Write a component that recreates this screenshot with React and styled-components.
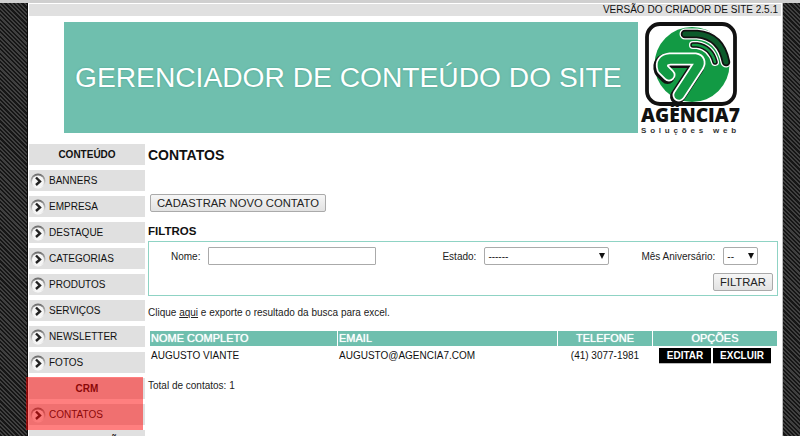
import React from "react";
import styled, { createGlobalStyle } from "styled-components";

const GlobalStyle = createGlobalStyle`
  html, body {
    margin: 0;
    padding: 0;
    height: 436px;
    overflow: hidden;
  }
  body {
    box-sizing: border-box;
    border-top: 3px solid #cfcfcf;
    font-family: "Liberation Sans", Arial, sans-serif;
    color: #111;
    background: repeating-linear-gradient(45deg, #161616 0, #161616 1.5px, #404040 1.5px, #404040 3px);
    background-clip: padding-box;
  }
`;

const Page = styled.div`
  width: 754px;
  height: 433px;
  margin-left: 28px;
  padding-top: 1px;
  box-sizing: border-box;
  background: #fff;
  box-shadow: -1px 0 0 #0c0c0c, 1px 0 0 #bdbdbd;
`;

const VersionBar = styled.div`
  height: 12px;
  margin: 0 1px;
  background: #e0e0e0;
  font-size: 10px;
  line-height: 12px;
  text-align: right;
  padding-right: 3px;
`;

const Header = styled.div`
  display: flex;
  margin: 6px 0 0 36px;
  height: 111px;
`;

const Banner = styled.div`
  width: 574px;
  background: #6fbfae;
  color: #fff;
  font-size: 28.2px;
  line-height: 111px;
  padding-left: 11px;
  box-sizing: border-box;
  white-space: nowrap;
  text-shadow: 0 0 2px #46a08c;
`;

const Logo = styled.div`
  margin-left: 3px;
  width: 104px;
`;

const LogoName = styled.div`
  font-family: "Open Sans", sans-serif;
  font-weight: 800;
  font-size: 19.2px;
  line-height: 16px;
  color: #111;
  white-space: nowrap;
`;

const LogoTag = styled.div`
  font-size: 8px;
  line-height: 8px;
  font-weight: 700;
  letter-spacing: 3.8px;
  color: #333;
  white-space: nowrap;
  margin-top: 4px;
`;

const Body = styled.div`
  display: flex;
  margin-top: 11px;
`;

const Sidebar = styled.div`
  width: 116px;
  margin-left: 1px;
  flex: none;
`;

const MenuTitle = styled.div`
  height: 21px;
  margin-bottom: 5px;
  background: #e0e0e0;
  font-size: 10px;
  font-weight: 700;
  line-height: 21px;
  text-align: center;
`;

const MenuItem = styled.div`
  height: 21px;
  margin-bottom: 5px;
  background: #e0e0e0;
  display: flex;
  align-items: center;
  gap: 3px;
  padding-left: 1px;
  font-size: 10px;
`;

const CrmGroup = styled.div`
  position: relative;
  &::after {
    content: "";
    position: absolute;
    left: -3px;
    right: 2px;
    top: -1px;
    bottom: -5px;
    background: rgba(255, 0, 0, 0.5);
  }
`;

const Main = styled.div`
  flex: 1;
  padding: 3px 4px 0 3px;
  min-width: 0;
`;

const Title = styled.h1`
  margin: 0;
  font-size: 14px;
  line-height: 16px;
  font-weight: 700;
`;

const ActionRow = styled.div`
  margin: 31px 0 0 2px;
`;

const GrayButton = styled.button`
  display: block;
  height: 18px;
  padding: 0 6px;
  border: 1px solid #aaa;
  border-radius: 2px;
  background: linear-gradient(#f6f6f6, #e2e2e2);
  font-family: inherit;
  font-size: 11.25px;
  line-height: 16px;
  color: #222;
`;

const SectionTitle = styled.h2`
  margin: 12px 0 0;
  font-size: 11.5px;
  line-height: 14px;
  font-weight: 700;
`;

const FilterBox = styled.div`
  margin-top: 3px;
  width: 630px;
  height: 55px;
  border: 1px solid #8fd3c4;
  box-sizing: border-box;
  padding: 5px 4px 0 22px;
`;

const FilterRow = styled.div`
  display: flex;
  align-items: center;
  height: 18px;
  font-size: 10px;
  color: #222;
`;

const NameInput = styled.div`
  width: 166px;
  height: 16px;
  margin-left: 8px;
  border: 1px solid #aaa;
  border-radius: 1px;
  background: #fff;
`;

const FieldLabel = styled.span`
  margin-left: ${(p) => p.$gap}px;
  white-space: nowrap;
`;

const SelectBox = styled.div`
  width: ${(p) => p.$width}px;
  height: 16px;
  margin-left: ${(p) => p.$gap}px;
  border: 1px solid #aaa;
  border-radius: 2px;
  background: #fff;
  display: flex;
  align-items: center;
  justify-content: space-between;
  padding: 0 3px;
  font-size: 10px;
`;

const Caret = styled.span`
  width: 0;
  height: 0;
  border-left: 3px solid transparent;
  border-right: 3px solid transparent;
  border-top: 6px solid #111;
`;

const FilterAction = styled.div`
  display: flex;
  justify-content: flex-end;
  margin-top: 8px;
`;

const ExportNote = styled.p`
  margin: 11px 0 0;
  font-size: 10px;
  line-height: 12px;
  color: #222;
  a {
    color: inherit;
    text-decoration: underline;
  }
`;

const Table = styled.table`
  width: 629px;
  margin: 12px 0 0 1px;
  border-collapse: separate;
  border-spacing: 1px 0;
  table-layout: fixed;
  font-size: 10px;
`;

const Th = styled.th`
  height: 15px;
  padding: 0 1px;
  background: #6fbfae;
  color: #fff;
  font-weight: 400;
  font-size: 11px;
  line-height: 15px;
  text-align: ${(p) => (p.$center ? "center" : "left")};
  text-shadow: 0 0 1px #fff;
`;

const Td = styled.td`
  height: 18px;
  padding: 0 1px 1px;
  font-size: 10px;
  color: #111;
  text-align: ${(p) => (p.$center ? "center" : "left")};
  white-space: nowrap;
`;

const Actions = styled.div`
  display: flex;
  justify-content: center;
  gap: 2px;
  padding-top: 1px;
`;

const DarkButton = styled.span`
  width: ${(p) => p.$width}px;
  height: 15px;
  background: #000;
  color: #fff;
  border-bottom: 1px solid #bbb;
  font-size: 10px;
  font-weight: 700;
  line-height: 15px;
  text-align: center;
`;

const Total = styled.p`
  margin: 15px 0 0;
  font-size: 10px;
  line-height: 12px;
  color: #222;
`;

const Arrow = () => (
  <svg width="16" height="16" viewBox="0 0 16 16">
    <defs>
      <linearGradient id="ring" x1="0" y1="0" x2="0" y2="1">
        <stop offset="0" stopColor="#666" />
        <stop offset="0.5" stopColor="#bbb" />
        <stop offset="1" stopColor="#fff" />
      </linearGradient>
    </defs>
    <circle cx="8" cy="8" r="7.5" fill="url(#ring)" />
    <circle cx="8" cy="8.5" r="6" fill="#f6f6f6" />
    <path d="M6 4.5 L10 8.5 L6 12" fill="none" stroke="#222" strokeWidth="2.4" />
  </svg>
);

const LogoMark = () => (
  <svg width="100" height="85" viewBox="0 0 100 85" style={{ display: "block" }}>
    <rect x="6" y="2" width="88" height="80" rx="13" fill="#fff" stroke="#111" strokeWidth="3.8" />
    <circle cx="51" cy="42.5" r="37.5" fill="#129a44" />
    <path d="M44 12 H56 Q80 14 85 40" fill="none" stroke="#fff" strokeWidth="11" strokeLinecap="round" />
    <path d="M44 12 H56 Q80 14 85 40" fill="none" stroke="#111" strokeWidth="8.5" strokeLinecap="round" />
    <path d="M44 12 H56 Q80 14 85 40" fill="none" stroke="#0c5a2b" strokeWidth="5" strokeLinecap="round" />
    <path d="M52 23 H56 Q70 25 74 40" fill="none" stroke="#fff" strokeWidth="8" strokeLinecap="round" />
    <path d="M52 23 H56 Q70 25 74 40" fill="none" stroke="#111" strokeWidth="5.5" strokeLinecap="round" />
    <path d="M52 23 H56 Q70 25 74 40" fill="none" stroke="#129a44" strokeWidth="2.5" strokeLinecap="round" />
    <g transform="translate(-1.5 1.5)">
      <path d="M28 53 L22 47 Q19 38 29 37 H54 Q60 38 57 44 L38 73" fill="none" stroke="#111" strokeWidth="15" strokeLinecap="round" strokeLinejoin="round" />
    </g>
    <path d="M28 53 L22 47 Q19 38 29 37 H54 Q60 38 57 44 L38 73" fill="none" stroke="#fff" strokeWidth="13" strokeLinecap="round" strokeLinejoin="round" />
    <path d="M28 53 L22 47 Q19 38 29 37 H54 Q60 38 57 44 L38 73" fill="none" stroke="#129a44" strokeWidth="9.5" strokeLinecap="round" strokeLinejoin="round" />
  </svg>
);

const menu = ["BANNERS", "EMPRESA", "DESTAQUE", "CATEGORIAS", "PRODUTOS", "SERVIÇOS", "NEWSLETTER", "FOTOS"];

const App = () => {
  return (
    <>
      <GlobalStyle />
      <Page>
        <VersionBar>VERSÃO DO CRIADOR DE SITE 2.5.1</VersionBar>
        <Header>
          <Banner>GERENCIADOR DE CONTEÚDO DO SITE</Banner>
          <Logo>
            <LogoMark />
            <LogoName>AGÊNCIA7</LogoName>
            <LogoTag>Soluções web</LogoTag>
          </Logo>
        </Header>
        <Body>
          <Sidebar>
            <MenuTitle>CONTEÚDO</MenuTitle>
            {menu.map((item) => (
              <MenuItem key={item}>
                <Arrow />
                {item}
              </MenuItem>
            ))}
            <CrmGroup>
              <MenuTitle>CRM</MenuTitle>
              <MenuItem>
                <Arrow />
                CONTATOS
              </MenuItem>
            </CrmGroup>
            <MenuTitle>CONFIGURAÇÕES</MenuTitle>
          </Sidebar>
          <Main>
            <Title>CONTATOS</Title>
            <ActionRow>
              <GrayButton>CADASTRAR NOVO CONTATO</GrayButton>
            </ActionRow>
            <SectionTitle>FILTROS</SectionTitle>
            <FilterBox>
              <FilterRow>
                <span>Nome:</span>
                <NameInput />
                <FieldLabel $gap={66}>Estado:</FieldLabel>
                <SelectBox $width={117} $gap={8}>
                  ------
                  <Caret />
                </SelectBox>
                <FieldLabel $gap={32}>Mês Aniversário:</FieldLabel>
                <SelectBox $width={27} $gap={8}>
                  --
                  <Caret />
                </SelectBox>
              </FilterRow>
              <FilterAction>
                <GrayButton>FILTRAR</GrayButton>
              </FilterAction>
            </FilterBox>
            <ExportNote>
              Clique <a href="#aqui">aqui</a> e exporte o resultado da busca para excel.
            </ExportNote>
            <Table>
              <colgroup>
                <col style={{ width: 187 }} />
                <col style={{ width: 219 }} />
                <col style={{ width: 94 }} />
                <col />
              </colgroup>
              <thead>
                <tr>
                  <Th>NOME COMPLETO</Th>
                  <Th>EMAIL</Th>
                  <Th $center>TELEFONE</Th>
                  <Th $center>OPÇÕES</Th>
                </tr>
              </thead>
              <tbody>
                <tr>
                  <Td>AUGUSTO VIANTE</Td>
                  <Td>AUGUSTO@AGENCIA7.COM</Td>
                  <Td $center>(41) 3077-1981</Td>
                  <Td>
                    <Actions>
                      <DarkButton $width={52}>EDITAR</DarkButton>
                      <DarkButton $width={58}>EXCLUIR</DarkButton>
                    </Actions>
                  </Td>
                </tr>
              </tbody>
            </Table>
            <Total>Total de contatos: 1</Total>
          </Main>
        </Body>
      </Page>
    </>
  );
};

export default App;
